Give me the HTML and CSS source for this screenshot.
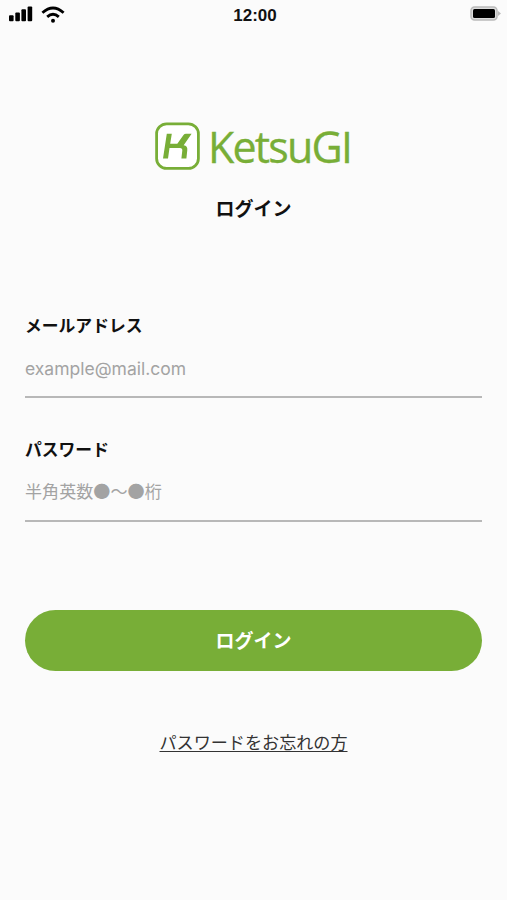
FILE: index.html
```html
<!DOCTYPE html>
<html lang="ja">
<head>
  <meta charset="UTF-8">
  <title>ログイン</title>
  <meta name="viewport" content="width=device-width, initial-scale=1">
  <link rel="stylesheet" href="styles.css">
</head>
<body>

<header class="status-bar">
  <div class="status-left">
    <svg class="signal" width="24" height="16" viewBox="0 0 24 16" aria-hidden="true">
      <rect x="0" y="9.3" width="4.6" height="5.9" rx="1"/>
      <rect x="6.3" y="6.6" width="4.6" height="8.6" rx="1"/>
      <rect x="12.4" y="3.3" width="4.6" height="11.9" rx="1"/>
      <rect x="18.6" y="0.5" width="4.6" height="14.7" rx="1"/>
    </svg>
    <svg class="wifi" width="24" height="17" viewBox="0 0 24 17" aria-hidden="true">
      <path d="M1.4 6.7 Q12 -2.7 22.6 6.7"/>
      <path d="M6.2 10.9 Q12 5.7 17.8 10.9"/>
      <circle cx="12" cy="14.7" r="2"/>
    </svg>
  </div>
  <time class="clock">12:00</time>
  <svg class="battery" width="31" height="16" viewBox="0 0 31 16" aria-hidden="true">
    <rect class="battery-case" x="1" y="1" width="26" height="13" rx="3.5"/>
    <rect class="battery-level" x="3" y="3" width="22" height="9" rx="1.5"/>
    <path class="battery-tip" d="M28 5 L31 7.5 L28 10 Z"/>
  </svg>
</header>

<main class="login">
  <div class="brand">
    <svg class="logo" width="198" height="50" viewBox="0 0 198 50" role="img" aria-label="KetsuGI">
      <rect class="logo-frame" x="1.6" y="1.8" width="41.8" height="44.6" rx="10"/>
      <path class="logo-mark" d="M11.8 11.8 H16.8 L15.2 21.8 H22.3 L28.5 13 Q29.4 11.8 31 11.8 H36.6 L28.7 23.2 Q32.8 24 32.3 28 L31.4 36.6 H26.4 L27.3 28.5 Q27.5 26 25 26 H14.5 L13 36.6 H8 Z"/>
      <text class="logo-text" x="53" y="40.5" textLength="145">KetsuGI</text>
    </svg>
    <h1 class="title">ログイン</h1>
  </div>

  <form class="login-form">
    <div class="field">
      <label class="field-label" for="email">メールアドレス</label>
      <input class="field-input" id="email" type="email" placeholder="example@mail.com">
    </div>
    <div class="field">
      <label class="field-label" for="password">パスワード</label>
      <input class="field-input field-input-ja" id="password" type="password" placeholder="半角英数●〜●桁">
    </div>
    <button class="submit-btn" type="submit">ログイン</button>
  </form>

  <a class="forgot-link" href="#">パスワードをお忘れの方</a>
</main>

</body>
</html>
```

FILE: styles.css
```css
:root {
  --bg:     #FBFBFB;
  --text:   #111;
  --green:  #78AE37;
  --hint:   #A3A3A3;
  --line:   #B8B8B8;
}

* { box-sizing: border-box; }

body {
  margin: 0;
  min-height: 100vh;
  background: var(--bg);
  color: var(--text);
  font-family: 'Liberation Sans', 'Noto Sans CJK JP', sans-serif;
}

/* status bar */
.status-bar {
  display: grid;
  grid-template-columns: 1fr auto 1fr;
  align-items: center;
  height: 30px;
  padding: 0 6px 2px 9px;
}

.status-left { display: flex; gap: 8px; }

.wifi path {
  fill: none;
  stroke: #000;
  stroke-width: 2.8;
}

.clock {
  font-size: 17px;
  font-weight: 700;
  line-height: 22px;
  padding-top: 4px;
}

.battery { justify-self: end; }
.battery-case { fill: #DDD; stroke: #BBB; stroke-width: 1.5; }
.battery-tip { fill: #BBB; }

/* logo and heading */
.login {
  display: flex;
  flex-direction: column;
  align-items: center;
  padding: 92px 25px 0;
}

.brand {
  display: flex;
  flex-direction: column;
  align-items: center;
}

.logo { display: block; overflow: visible; }

.logo-frame {
  fill: #FFF;
  stroke: var(--green);
  stroke-width: 2.8;
}

.logo-mark { fill: var(--green); }

.logo-text {
  fill: var(--green);
  stroke: var(--green);
  stroke-width: .3;
  font-family: 'Open Sans', 'Noto Sans', sans-serif;
  font-size: 43px;
}

.title {
  margin: 23px 0 0;
  font-size: 19px;
  font-weight: 700;
  line-height: 30px;
}

/* form */
.login-form {
  display: flex;
  flex-direction: column;
  width: 100%;
  margin-top: 90px;
}

.field {
  display: flex;
  flex-direction: column;
  height: 124px;
}

.field-label {
  font-size: 16.8px;
  font-weight: 700;
  line-height: 24px;
}

.field-input {
  width: 100%;
  height: 59px;
  padding: 2px 0 0;
  border: none;
  border-bottom: 2px solid var(--line);
  border-radius: 0;
  background: transparent;
  font-family: Inter, sans-serif;
  font-size: 17.5px;
  outline: none;
}

.field-input-ja {
  padding: 0 0 2px;
  font-family: 'Noto Sans CJK JP', sans-serif;
  font-size: 17.1px;
}

.field-input::placeholder { color: var(--hint); opacity: 1; }

.submit-btn {
  height: 61px;
  margin-top: 47px;
  padding-bottom: 3px;
  border: none;
  border-radius: 31px;
  background: var(--green);
  color: #FFF;
  font-family: inherit;
  font-size: 19px;
  font-weight: 700;
  cursor: pointer;
}

.forgot-link {
  margin-top: 61px;
  color: #333;
  font-size: 17.1px;
  line-height: 24px;
  text-underline-offset: 2px;
}
```
